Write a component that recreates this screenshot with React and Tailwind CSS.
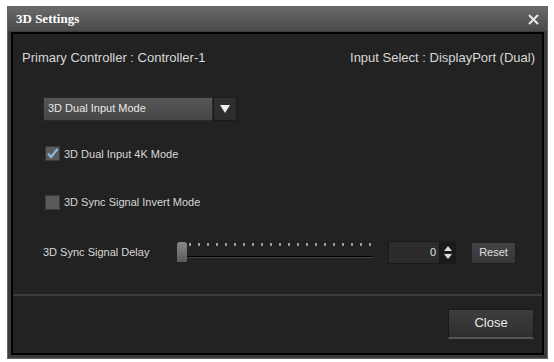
import React from "react";

const font = { fontFamily: '"Liberation Sans", Arial, sans-serif' };

function Checkbox({ checked }) {
  return (
    <div className="w-[15px] h-[15px] bg-[#5a5a5a] border border-[#3a3a3a] flex items-center justify-center">
      {checked && (
        <svg width="13" height="13" viewBox="0 0 13 13">
          <path d="M2 6.5 L5 10 L11.5 2" stroke="#8fb6e0" strokeWidth="2.2" fill="none" />
        </svg>
      )}
    </div>
  );
}

export default function App() {
  const ticks = Array.from({ length: 21 });
  return (
    <div className="w-[554px] h-[362px] bg-white pt-[6px] pl-[7px]" style={font}>
      <div className="w-[541px] h-[353px] bg-[#3a3a3a] flex flex-col border border-[#666]">
        <div className="h-[24px] bg-gradient-to-b from-[#6a6a6a] to-[#4a4a4a] flex items-center justify-between px-[8px]">
          <span className="text-white font-bold text-[13px]" style={{ fontFamily: '"Liberation Serif", serif' }}>3D Settings</span>
          <svg width="11" height="11" viewBox="0 0 11 11">
            <path d="M1 1 L10 10 M10 1 L1 10" stroke="#e8e8e8" strokeWidth="2" />
          </svg>
        </div>
        <div className="flex-1 mx-[3px] mb-[3px] mt-[1px] bg-[#222] border-2 border-black flex flex-col">
          <div className="flex justify-between pl-[9px] pr-[7px] pt-[14px] text-[13px] text-[#d8d8d8]">
            <span>Primary Controller : Controller-1</span>
            <span>Input Select : DisplayPort (Dual)</span>
          </div>
          <div className="pl-[30px] pt-[29px] flex flex-col">
            <div className="flex h-[24px]">
              <div className="w-[170px] bg-gradient-to-b from-[#565656] to-[#464646] border border-[#2a2a2a] flex items-center px-[4px] text-[11px] text-[#e8e8e8]">
                3D Dual Input Mode
              </div>
              <div className="w-[24px] bg-[#2e2e2e] border border-[#1a1a1a] flex items-center justify-center">
                <svg width="10" height="8" viewBox="0 0 10 8">
                  <path d="M0 0 L10 0 L5 8 Z" fill="#f0f0f0" />
                </svg>
              </div>
            </div>
            <div className="flex items-center gap-[4px] mt-[25px] ml-[2px] text-[11px] text-[#d8d8d8]">
              <Checkbox checked />
              <span>3D Dual Input 4K Mode</span>
            </div>
            <div className="flex items-center gap-[4px] mt-[32px] ml-[2px] text-[11px] text-[#d8d8d8]">
              <Checkbox />
              <span>3D Sync Signal Invert Mode</span>
            </div>
            <div className="flex items-center mt-[30px] h-[24px]">
              <span className="w-[134px] text-[11px] text-[#d8d8d8]">3D Sync Signal Delay</span>
              <div className="relative w-[196px] h-[24px]">
                <div className="absolute left-[12px] right-[2px] top-[2px] flex justify-between">
                  {ticks.map((_, i) => (
                    <div key={i} className="w-[2px] h-[3px] bg-[#9a9a9a]" />
                  ))}
                </div>
                <div className="absolute left-[10px] right-0 top-[15px] h-[2px] bg-black border-b border-[#444]" />
                <div className="absolute left-0 top-[1px] w-[10px] h-[20px] bg-gradient-to-b from-[#8a8a8a] to-[#5a5a5a] rounded-t-[3px]" />
              </div>
              <div className="ml-[15px] flex h-[23px]">
                <div className="w-[52px] bg-[#2c2c2c] border border-[#1a1a1a] flex items-center justify-end pr-[3px] text-[11px] text-[#e0e0e0]">0</div>
                <div className="w-[16px] bg-[#1a1a1a] flex flex-col items-center justify-center gap-[3px]">
                  <svg width="8" height="5" viewBox="0 0 8 5"><path d="M0 5 L8 5 L4 0 Z" fill="#ddd" /></svg>
                  <svg width="8" height="5" viewBox="0 0 8 5"><path d="M0 0 L8 0 L4 5 Z" fill="#ddd" /></svg>
                </div>
              </div>
              <div className="ml-[15px] w-[45px] h-[22px] bg-gradient-to-b from-[#444] to-[#363636] border border-[#1e1e1e] flex items-center justify-center text-[11px] text-[#e0e0e0]">
                Reset
              </div>
            </div>
          </div>
          <div className="mt-[29px] h-[2px] bg-[#3c3c3c]" />
          <div className="flex justify-end pr-[8px] pt-[13px]">
            <div className="w-[86px] h-[30px] bg-gradient-to-b from-[#3e3e3e] to-[#2e2e2e] border border-[#1a1a1a] border-b-2 border-b-[#555] flex items-center justify-center text-[13px] text-[#e8e8e8]">
              Close
            </div>
          </div>
        </div>
      </div>
    </div>
  );
}
